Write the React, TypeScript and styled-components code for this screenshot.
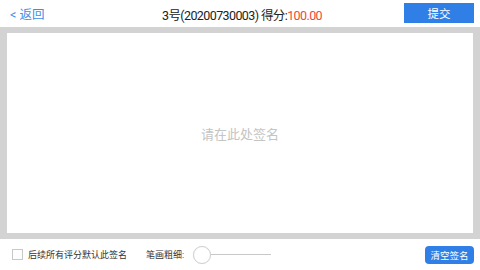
import React from "react";
import styled, { createGlobalStyle } from "styled-components";

const Global = createGlobalStyle`
  html, body { margin: 0; padding: 0; }
  body { font-family: Roboto, "Noto Sans CJK SC", sans-serif; background: #fff; }
  #root { width: 480px; height: 270px; }
`;

const Page = styled.div`
  width: 480px;
  height: 270px;
  display: flex;
  flex-direction: column;
  overflow: hidden;
`;

const Header = styled.div`
  height: 27px;
  display: grid;
  grid-template-columns: 1fr auto 1fr;
  align-items: center;
  padding: 0 6px 0 10px;
  box-sizing: border-box;
`;

const Back = styled.span`
  color: #3d8de8;
  font-size: 12.5px;
  justify-self: start;
`;

const Title = styled.div`
  font-size: 12.5px;
  letter-spacing: -0.6px;
  color: #222;
  padding-top: 2px;
`;

const Score = styled.span`
  color: #f0463b;
`;

const Submit = styled.button`
  justify-self: end;
  width: 70px;
  height: 20px;
  border: none;
  background: #2f7fe6;
  color: #fff;
  font-size: 11.5px;
  font-family: inherit;
  padding: 0;
  margin-top: -1px;
`;

const Board = styled.div`
  flex: 0 0 212px;
  background: #d3d3d3;
  padding: 6px 7px 6px 7px;
  box-sizing: border-box;
  display: flex;
`;

const Canvas = styled.div`
  flex: 1;
  background: #fff;
  display: flex;
  align-items: center;
  justify-content: center;
  color: #c4c4c4;
  font-size: 13px;
`;

const Footer = styled.div`
  flex: 1;
  display: flex;
  align-items: center;
  padding: 0 6px 0 12px;
  font-size: 9px;
  color: #333;
`;

const Check = styled.span`
  width: 9px;
  height: 9px;
  border: 1px solid #c8c8c8;
  margin-right: 5px;
`;

const Label = styled.span`
  margin-right: 19px;
`;

const Slider = styled.div`
  display: flex;
  align-items: center;
  margin-left: 9px;
`;

const Thumb = styled.span`
  width: 16px;
  height: 16px;
  border-radius: 50%;
  border: 1px solid #d0d0d0;
  background: #fff;
  box-shadow: 0 0 1px rgba(0,0,0,0.1);
`;

const Track = styled.span`
  width: 60px;
  height: 1px;
  background: #c8c8c8;
`;

const Clear = styled.button`
  margin-left: auto;
  height: 18px;
  width: 49px;
  border: none;
  border-radius: 4px;
  background: #2f7fe6;
  color: #fff;
  font-size: 9.5px;
  font-family: inherit;
  padding: 0;
`;

export default function App() {
  return (
    <Page>
      <Global />
      <Header>
        <Back>&lt; 返回</Back>
        <Title>
          3号(20200730003) 得分:<Score>100.00</Score>
        </Title>
        <Submit>提交</Submit>
      </Header>
      <Board>
        <Canvas>请在此处签名</Canvas>
      </Board>
      <Footer>
        <Check />
        <Label>后续所有评分默认此签名</Label>
        <span>笔画粗细:</span>
        <Slider>
          <Thumb />
          <Track />
        </Slider>
        <Clear>清空签名</Clear>
      </Footer>
    </Page>
  );
}
